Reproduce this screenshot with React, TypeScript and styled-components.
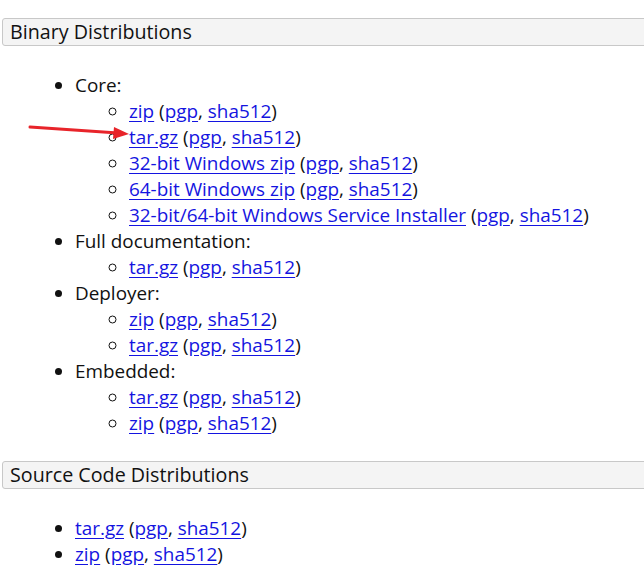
import styled, { createGlobalStyle } from "styled-components";

const GlobalStyle = createGlobalStyle`
  body {
    margin: 0;
    background: #fff;
    font-family: "Open Sans", "Liberation Sans", sans-serif;
    color: #111;
  }
`;

const Page = styled.div`
  position: relative;
  width: 644px;
  height: 581px;
  overflow: hidden;
  padding-top: 18px;
  box-sizing: border-box;
`;

const SectionHeader = styled.h3`
  margin: 0 -10px 0 2px;
  height: 28px;
  box-sizing: border-box;
  padding: 0 7px;
  border: 1px solid #c8c8c8;
  border-radius: 3px;
  background: #f4f4f4;
  font-size: 19.7px;
  font-weight: 400;
  line-height: 26px;
  color: #111;
`;

const List = styled.ul<{ $nested?: boolean }>`
  margin: ${(p) => (p.$nested ? "0" : "26px 0 25px")};
  padding-left: ${(p) => (p.$nested ? "54px" : "75px")};
  list-style-type: ${(p) => (p.$nested ? "circle" : "disc")};
  font-size: 18.9px;
  line-height: 26px;
`;

const Item = styled.li``;

const A = styled.a`
  color: #1414e0;
  text-decoration: underline;
  text-underline-offset: 3px;
`;

const Arrow = styled.svg`
  position: absolute;
  left: 26px;
  top: 120px;
`;

type Download = { label: string };

const Files = ({ label }: Download) => (
  <Item>
    <A href="#">{label}</A> (<A href="#">pgp</A>, <A href="#">sha512</A>)
  </Item>
);

const groups: { name: string; files: string[] }[] = [
  {
    name: "Core:",
    files: [
      "zip",
      "tar.gz",
      "32-bit Windows zip",
      "64-bit Windows zip",
      "32-bit/64-bit Windows Service Installer",
    ],
  },
  { name: "Full documentation:", files: ["tar.gz"] },
  { name: "Deployer:", files: ["zip", "tar.gz"] },
  { name: "Embedded:", files: ["tar.gz", "zip"] },
];

export default function App() {
  return (
    <Page>
      <GlobalStyle />
      <SectionHeader>Binary Distributions</SectionHeader>
      <List>
        {groups.map((g) => (
          <Item key={g.name}>
            {g.name}
            <List $nested>
              {g.files.map((f) => (
                <Files key={f} label={f} />
              ))}
            </List>
          </Item>
        ))}
      </List>
      <SectionHeader>Source Code Distributions</SectionHeader>
      <List>
        <Files label="tar.gz" />
        <Files label="zip" />
      </List>
      <Arrow width="106" height="22" viewBox="0 0 106 22">
        <line x1="4" y1="7" x2="92" y2="13" stroke="#e8242a" strokeWidth="3" strokeLinecap="round" />
        <polygon points="103,14 88,7 87,19" fill="#e8242a" />
      </Arrow>
    </Page>
  );
}
